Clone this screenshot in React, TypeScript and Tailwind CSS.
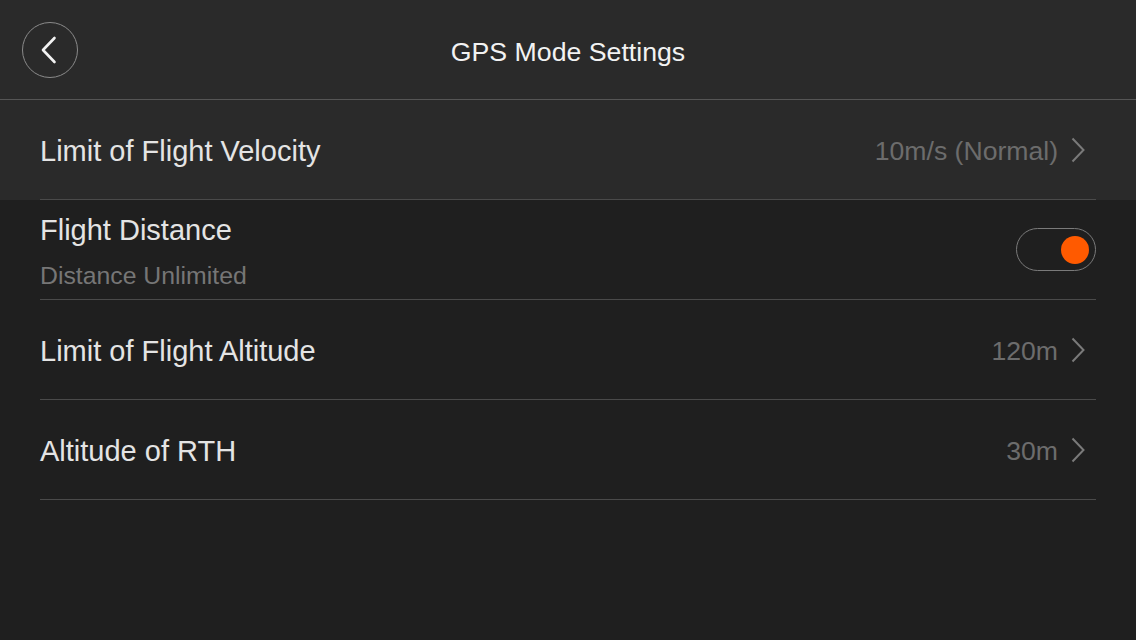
import React from "react";

function Chevron() {
  return (
    <svg width="14" height="26" viewBox="0 0 14 26" fill="none" className="ml-[13px] shrink-0">
      <path d="M1.5 1.5 L12.5 13 L1.5 24.5" stroke="#7a7a7a" strokeWidth="2" strokeLinecap="butt" strokeLinejoin="miter" />
    </svg>
  );
}

function ValueRow({ label, value, highlight }: { label: string; value: string; highlight?: boolean }) {
  return (
    <div className={highlight ? "bg-[#2a2a2a] px-[40px]" : "px-[40px]"}>
      <div className="h-[100px] border-b border-[#4a4a4a] flex items-center justify-between pr-[11px]">
        <span className="text-[29px] text-[#e4e4e4] leading-[32px] mt-[2px]">{label}</span>
        <div className="flex items-center">
          <span className="text-[26.6px] text-[#6c6c6c] leading-[32px] mt-[2px]">{value}</span>
          <Chevron />
        </div>
      </div>
    </div>
  );
}

export default function App() {
  return (
    <div
      className="w-[1136px] h-[640px] bg-[#1f1f1f] overflow-hidden"
      style={{ fontFamily: '"Liberation Sans", Arial, sans-serif' }}
    >
      <div className="h-[100px] bg-[#2a2a2a] border-b border-[#555555] grid grid-cols-[1fr_auto_1fr] items-center px-[22px]">
        <div className="flex items-center">
          <div className="w-[56px] h-[56px] rounded-full border border-[#8a8a8a] flex items-center justify-center">
            <svg width="18" height="28" viewBox="0 0 18 28" fill="none" className="mr-[3px]">
              <path d="M14.5 2 L3 14 L14.5 26" stroke="#f2f2f2" strokeWidth="2.6" strokeLinecap="round" strokeLinejoin="round" />
            </svg>
          </div>
        </div>
        <span className="text-[26.7px] text-[#f2f2f2] leading-[32px] mt-[4px]">GPS Mode Settings</span>
        <div />
      </div>

      <ValueRow label="Limit of Flight Velocity" value="10m/s (Normal)" highlight />

      <div className="px-[40px]">
        <div className="h-[100px] border-b border-[#4a4a4a] flex items-center justify-between">
          <div className="flex flex-col self-start pt-[14px]">
            <span className="text-[29px] text-[#e4e4e4] leading-[32px]">Flight Distance</span>
            <span className="text-[24.8px] text-[#767676] leading-[28px] mt-[16px]">Distance Unlimited</span>
          </div>
          <div className="w-[80px] h-[43px] rounded-full border-[1.5px] border-[#7a7a7a] flex items-center justify-end pr-[6px]">
            <div className="w-[28px] h-[28px] rounded-full bg-[#ff5a00]" />
          </div>
        </div>
      </div>

      <ValueRow label="Limit of Flight Altitude" value="120m" />
      <ValueRow label="Altitude of RTH" value="30m" />
    </div>
  );
}
